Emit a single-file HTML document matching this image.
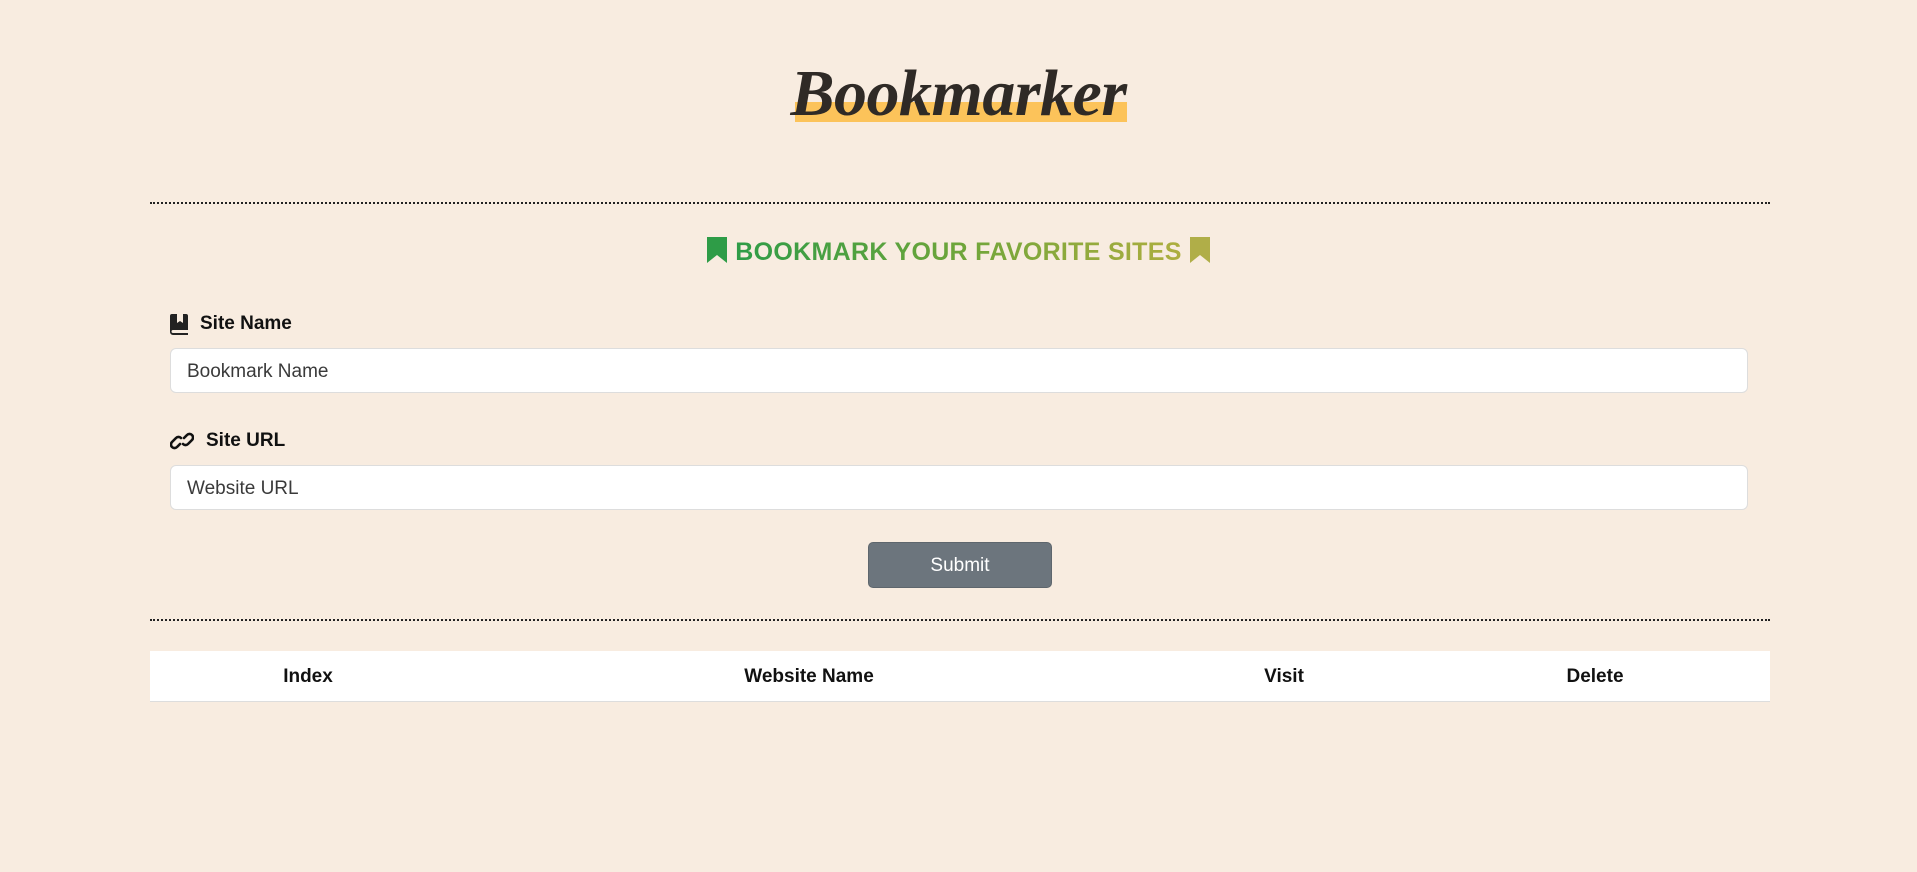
<!DOCTYPE html>
<html><head><meta charset="utf-8"><style>
html,body{margin:0;padding:0;background:#f8ece0;width:1917px;height:872px;overflow:hidden;font-family:"Liberation Sans",sans-serif;}
.logo{position:absolute;left:0;width:1917px;top:56px;text-align:center;}
.logo .bar{position:absolute;left:795px;top:46px;width:332px;height:20px;background:#fcc35a;}
.logo span.t{position:relative;font-family:"Liberation Serif",serif;font-style:italic;font-weight:bold;font-size:66px;color:#2f2a26;letter-spacing:-0.5px;line-height:76px;}
.hr{position:absolute;left:150px;width:1620px;border-top:2px dotted #222;}
.head{position:absolute;top:234px;left:0;width:1917px;text-align:center;font-weight:bold;font-size:25px;letter-spacing:0.3px;line-height:36px;}
.head .txt{background:linear-gradient(90deg,#2e9c47,#6ea53a 50%,#aeae3f);-webkit-background-clip:text;background-clip:text;color:transparent;}
.label{position:absolute;left:170px;font-weight:bold;font-size:19px;color:#111;display:flex;align-items:center;gap:12px;}
.input{position:absolute;left:170px;width:1578px;height:45px;background:#fff;border:1px solid #ddd;border-radius:6px;font-size:19px;color:#3a3a3a;line-height:45px;padding-left:16px;box-sizing:border-box;}
.btn{position:absolute;left:868px;top:542px;width:184px;height:46px;background:#6c757d;border:1px solid #5e666d;border-radius:5px;color:#fff;font-size:19px;text-align:center;line-height:46px;box-sizing:border-box;}
.table{position:absolute;left:150px;top:651px;width:1620px;height:50px;background:#fff;border-bottom:1px solid #ddd;font-weight:bold;font-size:19px;color:#111;}
.table div{position:absolute;top:1px;line-height:50px;transform:translateX(-50%);}
</style></head><body>
<div class="logo"><div class="bar"></div><span class="t">Bookmarker</span></div>
<div class="hr" style="top:202px"></div>
<div class="head">
<svg width="22" height="28" viewBox="0 0 22 28" style="vertical-align:-4px"><path d="M1 1h20v26l-10-8-10 8z" fill="#2e9c47"/></svg>
<span class="txt">BOOKMARK YOUR FAVORITE SITES</span>
<svg width="22" height="28" viewBox="0 0 22 28" style="vertical-align:-4px"><path d="M1 1h20v26l-10-8-10 8z" fill="#b0ae48"/></svg>
</div>
<div class="label" style="top:313px"><svg width="18" height="21" viewBox="0 0 18 21"><path d="M2 0h14a2 2 0 0 1 2 2v14H3a1.5 1.5 0 0 0 0 3h15v2H3a3 3 0 0 1-3-3V2a2 2 0 0 1 2-2z" fill="#222"/><path d="M7 0h6v9l-3-2-3 2z" fill="#f8ece0"/></svg><span>Site Name</span></div>
<div class="input" style="top:348px">Bookmark Name</div>
<div class="label" style="top:430px"><svg width="24" height="20" viewBox="0 0 24 20"><g fill="none" stroke="#111" stroke-width="2.6" stroke-linecap="round"><path d="M10 13l-3 3a3.5 3.5 0 0 1-5-5l4-4a3.5 3.5 0 0 1 5 0"/><path d="M14 7l3-3a3.5 3.5 0 0 1 5 5l-4 4a3.5 3.5 0 0 1-5 0"/></g></svg><span>Site URL</span></div>
<div class="input" style="top:465px">Website URL</div>
<div class="btn">Submit</div>
<div class="hr" style="top:619px"></div>
<div class="table"><div style="left:158px">Index</div><div style="left:659px">Website Name</div><div style="left:1134px">Visit</div><div style="left:1445px">Delete</div></div>
</body></html>
